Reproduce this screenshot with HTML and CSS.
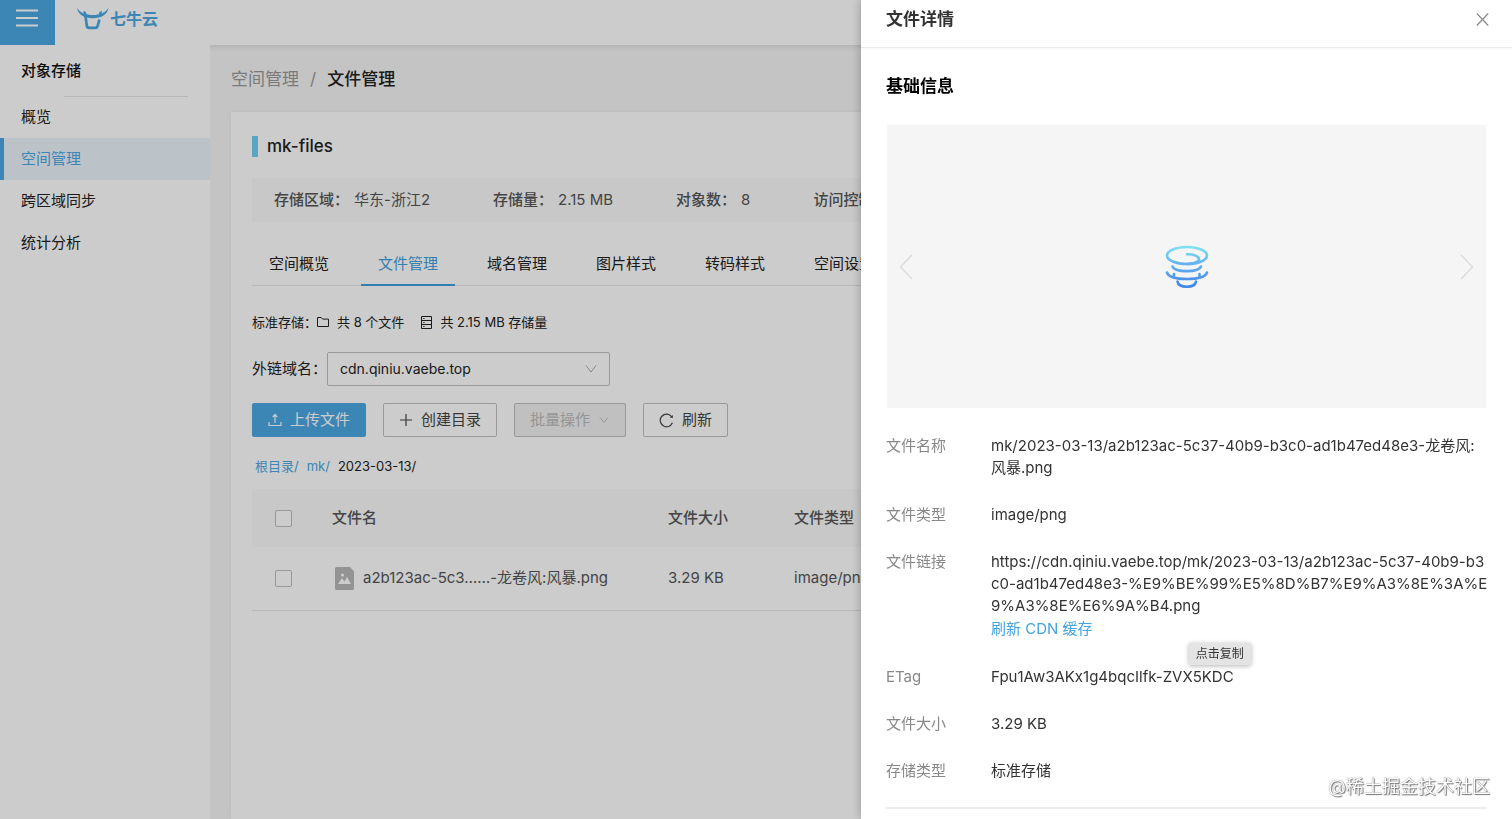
FILE: index.html
```html
<!DOCTYPE html>
<html lang="zh-CN">
<head>
<meta charset="utf-8">
<title>文件管理 - 对象存储</title>
<link rel="stylesheet" href="styles.css">
</head>
<body>
<header class="topbar">
  <button class="menu-btn" type="button" aria-label="菜单">
    <svg width="22" height="18" viewBox="0 0 22 18" fill="none" stroke="currentColor" stroke-width="2"><path d="M0 1.500h22M0 9h22M0 16.500h22"/></svg>
  </button>
  <a class="logo" href="#">
    <svg width="32" height="24" viewBox="0 0 32 24"><path d="M0 1C3.500 6 9 8 15.700 8S28 6 31.400 1C30.500 7.500 24.500 11.300 15.700 11.300S1 7.500 0 1z" fill="currentColor"/><path d="M6.300 3.800l2.800 1.400.3 3h-2.500zM25 3.800l-2.800 1.400-.3 3h2.500z" fill="currentColor"/><path d="M8.300 7.500l1.500 11.300c.2 1.400.8 2 2.200 2h6.200c1.500 0 2.100-.6 2.500-2l1.700-6.300" fill="none" stroke="currentColor" stroke-width="2.700"/></svg>
    <span>七牛云</span>
  </a>
</header>

<div class="shell">
  <nav class="sidebar" aria-label="对象存储">
    <h2 class="side-title">对象存储</h2>
    <a class="side-link" href="#">概览</a>
    <a class="side-link is-active" href="#">空间管理</a>
    <a class="side-link" href="#">跨区域同步</a>
    <a class="side-link" href="#">统计分析</a>
  </nav>

  <main class="main">
    <div class="breadcrumb"><a href="#">空间管理</a><span class="sep">/</span><strong>文件管理</strong></div>

    <section class="card">
      <h1 class="bucket">mk-files</h1>

      <dl class="summary">
        <div><dt>存储区域：</dt><dd>华东-浙江2</dd></div>
        <div><dt>存储量：</dt><dd>2.15 MB</dd></div>
        <div><dt>对象数：</dt><dd>8</dd></div>
        <div><dt>访问控制：</dt><dd>公开</dd></div>
      </dl>

      <nav class="tabs">
        <a href="#">空间概览</a>
        <a class="is-active" href="#">文件管理</a>
        <a href="#">域名管理</a>
        <a href="#">图片样式</a>
        <a href="#">转码样式</a>
        <a href="#">空间设置</a>
      </nav>

      <p class="stats">
        <span>标准存储：</span>
        <svg width="12" height="10" viewBox="0 0 12 10" fill="none" stroke="currentColor"><path d="M.5.5h3.700l1.500 1.600h5.800v7.400H.5z"/></svg>
        <span class="stat-text">共 8 个文件</span>
        <svg width="11" height="13" viewBox="0 0 11 13" fill="none" stroke="currentColor"><path d="M.5.5h10v12H.5zM.5 4.500h10M.5 8.500h10M2.300 2.500h1.200M2.300 6.500h1.200M2.300 10.500h1.200"/></svg>
        <span class="stat-text">共 2.15 MB 存储量</span>
      </p>

      <div class="domain">
        <label for="domain">外链域名：</label>
        <span class="select-wrap">
          <select id="domain"><option>cdn.qiniu.vaebe.top</option></select>
          <svg class="caret" width="12" height="8" viewBox="0 0 12 8" fill="none" stroke="currentColor"><path d="M1 .5l5 6.500 5-6.500"/></svg>
        </span>
      </div>

      <div class="actions">
        <button class="btn btn-primary" type="button">
          <svg width="14" height="14" viewBox="0 0 14 14" fill="none" stroke="currentColor" stroke-width="1.200"><path d="M1 9v3.500h12V9M7 10V2M4.800 4L7 1.500 9.200 4"/></svg>上传文件
        </button>
        <button class="btn" type="button">
          <svg width="14" height="14" viewBox="0 0 14 14" fill="none" stroke="currentColor" stroke-width="1.200"><path d="M7 1v12M1 7h12"/></svg>创建目录
        </button>
        <button class="btn" type="button" disabled>批量操作
          <svg width="12" height="7" viewBox="0 0 12 7" fill="none" stroke="currentColor"><path d="M2 .5l4 5 4-5"/></svg>
        </button>
        <button class="btn" type="button">
          <svg width="15" height="15" viewBox="0 0 15 15" fill="none" stroke="currentColor" stroke-width="1.200"><path d="M13.400 9.800A6.300 6.300 0 1 1 12.800 4"/><path d="M13.800 2v3l-3-.4z" fill="currentColor" stroke="none"/></svg>刷新
        </button>
      </div>

      <div class="path"><a href="#">根目录/</a><a href="#">mk/</a><span>2023-03-13/</span></div>

      <table class="files">
        <colgroup><col class="c-check"><col class="c-name"><col class="c-size"><col></colgroup>
        <thead>
          <tr><th><input type="checkbox" aria-label="全选"></th><th>文件名</th><th>文件大小</th><th>文件类型</th></tr>
        </thead>
        <tbody>
          <tr>
            <td><input type="checkbox" aria-label="选择文件"></td>
            <td><span class="file"><svg width="19" height="23" viewBox="0 0 19 23"><path d="M1.500 0H15l4 4.500v17a1.500 1.500 0 0 1-1.500 1.500h-16A1.500 1.500 0 0 1 0 21.500v-20A1.500 1.500 0 0 1 1.500 0z" fill="#b8b8b8"/><path d="M3 17l4-6 2.500 3.500L12 10l4 7z" fill="#fff"/><circle cx="7.500" cy="8" r="1.600" fill="#fff"/></svg>a2b123ac-5c3……-龙卷风:风暴.png</span></td>
            <td>3.29 KB</td>
            <td>image/png</td>
          </tr>
        </tbody>
      </table>
    </section>
  </main>
</div>

<div class="mask"></div>

<aside class="drawer" role="dialog" aria-labelledby="drawer-title">
  <header class="drawer-head">
    <h2 id="drawer-title">文件详情</h2>
    <button class="close" type="button" aria-label="关闭"><svg width="13" height="13" viewBox="0 0 13 13" fill="none" stroke="currentColor" stroke-width="1.200"><path d="M.8.500l11.400 12M12.200.5L.8 12.500"/></svg></button>
  </header>
  <div class="drawer-body">
    <h3>基础信息</h3>
    <div class="preview">
      <button type="button" aria-label="上一个"><svg width="14" height="26" viewBox="0 0 14 26" fill="none" stroke="currentColor" stroke-width="1.500"><path d="M13 1L1.500 13 13 25"/></svg></button>
      <svg width="44" height="44" viewBox="0 0 44 44" fill="none" stroke="url(#wind)" stroke-width="2.600" stroke-linecap="round">
        <defs><linearGradient id="wind" gradientUnits="userSpaceOnUse" x1="0" y1="0" x2="0" y2="44"><stop offset="0" stop-color="#83e5f3"/><stop offset=".45" stop-color="#62b0ee"/><stop offset="1" stop-color="#3f7fe6"/></linearGradient></defs>
        <ellipse cx="22" cy="10.500" rx="20" ry="8.500"/>
        <path d="M22 9.200c7-.2 12 2.200 12 5 0 2.500-5 4.800-12 4.800"/>
        <path d="M7.500 21.500c1 3 7 4.600 14 4.600s13.500-1.600 14.500-4.600"/>
        <path d="M2 27.500c1.500 4.500 10 6.500 20 6.500s18.500-2 20-6.500M9 29v2M34.500 29v2"/>
        <path d="M12.500 36.500c.5 3.500 4.500 5.200 9.300 5.200s8.700-1.700 9.200-5.200"/>
      </svg>
      <button type="button" aria-label="下一个"><svg width="14" height="26" viewBox="0 0 14 26" fill="none" stroke="currentColor" stroke-width="1.500"><path d="M1 1l11.500 12L1 25"/></svg></button>
    </div>
    <dl class="details">
      <dt>文件名称</dt><dd>mk/2023-03-13/a2b123ac-5c37-40b9-b3c0-ad1b47ed48e3-龙卷风:<br>风暴.png</dd>
      <dt>文件类型</dt><dd>image/png</dd>
      <dt>文件链接</dt><dd>https://cdn.qiniu.vaebe.top/mk/2023-03-13/a2b123ac-5c37-40b9-b3<br>c0-ad1b47ed48e3-%E9%BE%99%E5%8D%B7%E9%A3%8E%3A%E<br>9%A3%8E%E6%9A%B4.png<a class="refresh" href="#">刷新 CDN 缓存</a></dd>
      <dt>ETag</dt><dd><span class="copyable">Fpu1Aw3AKx1g4bqcIlfk-ZVX5KDC<span class="tip" role="tooltip">点击复制</span></span></dd>
      <dt>文件大小</dt><dd>3.29 KB</dd>
      <dt>存储类型</dt><dd>标准存储</dd>
    </dl>
  </div>
</aside>
<div class="watermark">@稀土掘金技术社区</div>
</body>
</html>
```
FILE: styles.css
```css
* { box-sizing: border-box; }
html, body { height: 100%; }
body {
  margin: 0;
  display: flex;
  flex-direction: column;
  overflow: hidden;
  background: #f5f5f5;
  color: #222;
  font: 15px/22px Inter, "Noto Sans CJK SC", sans-serif;
}
h1, h2, h3, p, dl, dd { margin: 0; }
a { color: inherit; text-decoration: none; }
button { font: inherit; padding: 0; border: 0; background: none; }
svg { flex: none; display: block; }

.topbar {
  flex: none;
  display: flex;
  height: 45px;
  background: #fff;
  box-shadow: 0 1px 6px rgba(0, 0, 0, .12);
}
.menu-btn {
  width: 55px;
  padding: 0 0 9px 16px;
  background: #4ba8e4;
  color: #fff;
}
.logo {
  display: flex;
  align-items: center;
  gap: 1px;
  padding: 0 0 8px 22px;
  color: #4ba8e4;
  font-size: 16px;
  font-weight: 700;
}

.shell { flex: 1; display: flex; min-height: 0; }
.sidebar { flex: none; width: 210px; background: #fff; }
.side-title {
  padding: 15px 0 13px 21px;
  font-size: 15px;
  font-weight: 500;
  color: #111;
}
.side-title::after {
  content: "";
  display: block;
  height: 1px;
  margin: 14px 22px -14px 43px;
  background: #e6e6e6;
}
.side-link {
  display: block;
  padding: 10px 0 10px 21px;
}
.side-link.is-active {
  padding-left: 17px;
  border-left: 4px solid #4ba8e4;
  background: #ebf4fb;
  color: #4ba8e4;
}

.main { flex: 1; min-width: 0; display: flex; flex-direction: column; padding: 23px 21px 0; }
.breadcrumb { padding-bottom: 22px; font-size: 17px; color: #999; }
.breadcrumb .sep { margin: 0 11px; }
.breadcrumb strong { font-weight: 500; color: #222; }

.card { flex: 1; padding: 24px 21px; background: #fff; box-shadow: 0 0 4px rgba(0, 0, 0, .06); }
.bucket {
  border-left: 6px solid #6fd0ef;
  padding-left: 9px;
  font-size: 17px;
  line-height: 21px;
  font-weight: 500;
}
.summary {
  display: flex;
  gap: 63px;
  margin-top: 21px;
  padding: 11px 22px;
  background: #fafafa;
  color: #555;
  white-space: nowrap;
}
.summary div { display: flex; gap: 5px; }
.summary dt { font-weight: 500; }

.tabs { display: flex; gap: 15px; margin-top: 21px; border-bottom: 1px solid #e6e6e6; }
.tabs a { padding: 10px 17px 9px; border-bottom: 2px solid transparent; margin-bottom: -1px; white-space: nowrap; }
.tabs a.is-active { color: #3f9fdc; border-color: #3f9fdc; }

.stats { display: flex; align-items: center; margin-top: 26px; font-size: 13px; line-height: 20px; }
.stat-text { margin: 0 17px 0 8px; }

.domain { display: flex; align-items: center; margin-top: 20px; }
.select-wrap { position: relative; width: 283px; }
.select-wrap select {
  appearance: none;
  width: 100%;
  height: 34px;
  padding: 0 12px;
  border: 1px solid #bfbfbf;
  border-radius: 2px;
  background: #fff;
  color: #222;
  font: inherit;
  font-size: 14px;
}
.caret { position: absolute; right: 13px; top: 13px; color: #aaa; }

.actions { display: flex; gap: 17px; margin-top: 17px; }
.btn {
  display: flex;
  align-items: center;
  gap: 8px;
  height: 34px;
  padding: 0 15px;
  border: 1px solid #bfbfbf;
  border-radius: 2px;
  background: #fff;
  color: #444;
}
.btn-primary { border-color: #4ba8e4; background: #4ba8e4; color: #fff; }
.btn:disabled { background: #f0f0f0; color: #bbb; }

.path { display: flex; gap: 8px; margin-top: 19px; padding-left: 3px; font-size: 13px; line-height: 20px; }
.path a { color: #4ba8e4; }

.files { width: 100%; margin-top: 13px; border-collapse: collapse; table-layout: fixed; color: #555; }
.c-check { width: 58px; }
.c-name { width: 336px; }
.c-size { width: 126px; }
.files th, .files td { padding: 0 22px; text-align: left; white-space: nowrap; }
.files th { height: 58px; background: #fafafa; font-weight: 500; }
.files td { height: 63px; border-bottom: 1px solid #e6e6e6; }
.files input {
  appearance: none;
  display: block;
  width: 17px;
  height: 17px;
  margin: 0 0 0 1px;
  border: 1px solid #bfbfbf;
  border-radius: 2px;
  background: #fff;
}
.file { display: flex; align-items: center; gap: 9px; padding-left: 3px; }

.mask { position: fixed; inset: 0; background: rgba(0, 0, 0, .2); }

.drawer {
  position: fixed;
  top: 0;
  right: 0;
  bottom: 0;
  width: 651px;
  max-width: 100%;
  background: #fff;
  box-shadow: 0 0 10px rgba(0, 0, 0, .28);
  color: #333;
}
.drawer-head {
  display: flex;
  align-items: center;
  justify-content: space-between;
  padding: 8px 23px 17px 25px;
  border-bottom: 1px solid #ececec;
  box-shadow: 0 1px 3px rgba(0, 0, 0, .04);
}
.drawer h2, .drawer h3 { font-size: 17px; line-height: 22px; font-weight: 700; color: #333; }
.drawer h3 { color: #000; }
.close { color: #888; }
.drawer-body { padding: 27px 25px; }
.preview {
  display: flex;
  align-items: center;
  justify-content: space-between;
  height: 283px;
  margin: 28px 1px 0;
  padding: 0 12px;
  background: #f5f5f5;
}
.preview button { color: #dcdcdc; }
.details {
  display: grid;
  grid-template-columns: 80px 1fr;
  gap: 25px;
  margin-top: 27px;
  padding-bottom: 25px;
  border-bottom: 2px solid #ececec;
}
.details dt { color: #888; }
.details dd { min-width: 0; white-space: nowrap; }
.refresh { display: block; line-height: 24px; color: #45a3e0; }
.copyable { position: relative; }
.tip {
  position: absolute;
  right: -17px;
  bottom: 21px;
  padding: 0 7px;
  border-radius: 2px;
  background: #e4e4e4;
  box-shadow: 0 1px 5px rgba(0, 0, 0, .3);
  color: #333;
  font-size: 12px;
  line-height: 22px;
  white-space: nowrap;
}
.watermark {
  position: fixed;
  right: 22px;
  bottom: 21px;
  color: #fff;
  font-size: 18px;
  text-shadow: 0 0 1px #555, 1px 1px 1px #777;
}
```
